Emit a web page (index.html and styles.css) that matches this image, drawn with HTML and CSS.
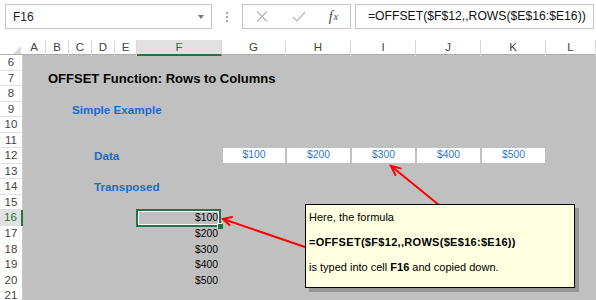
FILE: index.html
```html
<!DOCTYPE html>
<html>
<head>
    <meta charset="utf-8">
    <link rel="stylesheet" href="styles.css">
</head>
<body>
    <!-- Formula bar -->
    <div class="toolbar">
        <div class="name-box">
            <span>F16</span>
            <span class="caret"></span>
        </div>
        <div class="grip"><i></i><i></i><i></i></div>
        <div class="fx-buttons">
            <span class="fx-slot cancel">
                <svg width="12" height="11" viewBox="0 0 12 11"><path d="M1 0.5 L11 10.5 M11 0.5 L1 10.5" stroke="#b4b4b4" stroke-width="1.2" fill="none"/></svg>
            </span>
            <span class="fx-slot enter">
                <svg width="14" height="11" viewBox="0 0 14 11"><path d="M1 6 L5 10 L13 1" stroke="#b4b4b4" stroke-width="1.2" fill="none"/></svg>
            </span>
            <span class="fx-slot fx">f<sub>x</sub></span>
        </div>
        <div class="formula">=OFFSET($F$12,,ROWS($E$16:$E16))</div>
    </div>

    <!-- Sheet -->
    <div class="col-heads">
        <div class="corner"></div>
        <div class="ch">A</div>
        <div class="ch">B</div>
        <div class="ch">C</div>
        <div class="ch">D</div>
        <div class="ch">E</div>
        <div class="ch active">F</div>
        <div class="ch">G</div>
        <div class="ch">H</div>
        <div class="ch">I</div>
        <div class="ch">J</div>
        <div class="ch">K</div>
        <div class="ch">L</div>
    </div>

    <div class="rows">
        <div class="row"><div class="rh">6</div></div>
        <div class="row"><div class="rh">7</div><div class="title">OFFSET Function: Rows to Columns</div></div>
        <div class="row"><div class="rh">8</div></div>
        <div class="row"><div class="rh">9</div><div class="subhead from-c">Simple Example</div></div>
        <div class="row"><div class="rh">10</div></div>
        <div class="row"><div class="rh">11</div></div>
        <div class="row">
            <div class="rh">12</div>
            <div class="subhead from-d short">Data</div>
            <div class="val">$100</div>
            <div class="val">$200</div>
            <div class="val">$300</div>
            <div class="val">$400</div>
            <div class="val">$500</div>
        </div>
        <div class="row"><div class="rh">13</div></div>
        <div class="row"><div class="rh">14</div><div class="subhead from-d">Transposed</div></div>
        <div class="row"><div class="rh">15</div></div>
        <div class="row"><div class="rh active">16</div><div class="num selected">$100</div></div>
        <div class="row"><div class="rh">17</div><div class="num">$200</div></div>
        <div class="row"><div class="rh">18</div><div class="num">$300</div></div>
        <div class="row"><div class="rh">19</div><div class="num">$400</div></div>
        <div class="row"><div class="rh">20</div><div class="num">$500</div></div>
        <div class="row"><div class="rh">21</div></div>
    </div>

    <!-- Arrows and comment box drawn over the sheet -->
    <svg class="arrows" width="596" height="300" viewBox="0 0 596 300">
        <g stroke="#ff0000" stroke-width="2" fill="none" stroke-linecap="round">
            <path d="M439 205 L391 166"/>
            <path d="M395.4 175 L391 166 L400.7 168.4"/>
            <path d="M305 247 L223 219"/>
            <path d="M229.5 225 L223 219 L232 217"/>
        </g>
    </svg>

    <div class="callout">
        <div>Here, the formula</div>
        <div class="formula-text">=OFFSET($F$12,,ROWS($E$16:$E16))</div>
        <div>is typed into cell <b>F16</b> and copied down.</div>
    </div>
</body>
</html>
```

FILE: styles.css
```css
body {
    margin: 0;
    width: 596px;
    height: 300px;
    overflow: hidden;
    position: relative;
    background: #fff;
    font-family: "Liberation Sans", Arial, sans-serif;
    color: #000;
}
.toolbar {
    display: flex;
    align-items: center;
    height: 25px;
    padding: 4px 0 0 5px;
    margin-bottom: 11px;
}
.name-box {
    width: 207px;
    height: 25px;
    box-sizing: border-box;
    border: 1px solid #c6c6c6;
    display: flex;
    align-items: center;
    justify-content: space-between;
    padding: 0 7px 0 7px;
    font-size: 12px;
    color: #222;
}
.caret {
    width: 0;
    height: 0;
    border-style: solid;
    border-width: 4px 3.5px 0 3.5px;
    border-color: #777 transparent transparent transparent;
}
.grip {
    display: flex;
    flex-direction: column;
    gap: 2px;
    margin: 0 14px 0 14px;
}
.grip i {
    display: block;
    width: 2px;
    height: 2px;
    background: #a6a6a6;
}
.fx-buttons {
    width: 109px;
    height: 25px;
    box-sizing: border-box;
    border: 1px solid #c6c6c6;
    display: flex;
    align-items: center;
}
.fx-slot {
    display: flex;
    justify-content: center;
    align-items: center;
}
.cancel {
    width: 38px;
}
.enter {
    width: 36px;
}
.fx {
    width: 33px;
    font-family: "Liberation Serif", serif;
    font-style: italic;
    font-size: 14px;
    color: #444;
}
.fx sub {
    font-size: 10px;
    vertical-align: baseline;
    margin-left: 1px;
}
.formula {
    flex: 1;
    height: 25px;
    box-sizing: border-box;
    border: 1px solid #c6c6c6;
    margin: 0 2px 0 4px;
    padding-left: 12px;
    font-size: 12.2px;
    line-height: 23px;
    color: #111;
}

.col-heads,
.row {
    display: grid;
    grid-template-columns: 23px 23px 23px 23px 23px 22px 85px 64px 65px 65px 65px 65px 1fr;
}
.col-heads {
    height: 15px;
    box-sizing: border-box;
    border-bottom: 1px solid #ababab;
    font-size: 11.5px;
    color: #444;
}
.corner {
    display: flex;
    align-items: flex-end;
    justify-content: flex-end;
    padding: 0 2px 2px 0;
}
.corner::after {
    content: "";
    border-style: solid;
    border-width: 0 0 8px 8px;
    border-color: transparent transparent #d9d9d9 transparent;
}
.ch {
    border-right: 1px solid #d9d9d9;
    text-align: center;
    line-height: 14px;
}
.ch.active {
    background: #e1e1e1;
    color: #217346;
    border-bottom: 2px solid #217346;
}

.rows {
    background: #c0c0c0;
}
.row {
    height: 15.55px;
    line-height: 15.55px;
}
.rh {
    background: #fff;
    box-sizing: border-box;
    border-right: 1px solid #c8c8c8;
    border-bottom: 1px solid #e1e1e1;
    text-align: center;
    font-size: 11.5px;
    line-height: 14.2px;
    color: #444;
}
.rh.active {
    background: #e1e1e1;
    color: #217346;
    border-right: 2px solid #217346;
}
.title {
    grid-column: 3 / -1;
    padding-left: 2px;
    font-size: 13px;
    font-weight: bold;
}
.subhead {
    padding-left: 2px;
    font-size: 11.7px;
    font-weight: bold;
    color: #1c6dc0;
}
.from-c {
    grid-column: 4 / -1;
    padding-left: 3px;
}
.from-d {
    grid-column: 5 / -1;
}
.from-d.short {
    grid-column: 5 / 8;
}
.val {
    background: #fff;
    margin: 0 1px 1px 1px;
    text-align: center;
    font-size: 10.3px;
    line-height: 14.6px;
    color: #2a78cc;
}
.num {
    grid-column: 7;
    text-align: right;
    padding-right: 4px;
    font-size: 10.3px;
    line-height: 16.6px;
}
.num.selected {
    position: relative;
    margin: -1px 1px 0 -1px;
    padding-right: 1px;
    border: 2px solid #217346;
    box-shadow: inset 0 0 0 1px #fff;
    line-height: 14px;
}
.num.selected::after {
    content: "";
    position: absolute;
    right: -4px;
    bottom: -4px;
    width: 5px;
    height: 5px;
    background: #217346;
    box-shadow: -1px -1px 0 #fff;
}

.arrows {
    position: absolute;
    left: 0;
    top: 0;
    pointer-events: none;
}
.callout {
    position: absolute;
    left: 305px;
    top: 204px;
    width: 270px;
    height: 84px;
    box-sizing: border-box;
    border: 1px solid #000;
    background: #ffffe1;
    box-shadow: 4px 4px 0 #959595;
    padding: 0 3px;
    font-size: 11px;
    line-height: 25px;
}
.formula-text {
    font-weight: bold;
    letter-spacing: 0.3px;
}
```
